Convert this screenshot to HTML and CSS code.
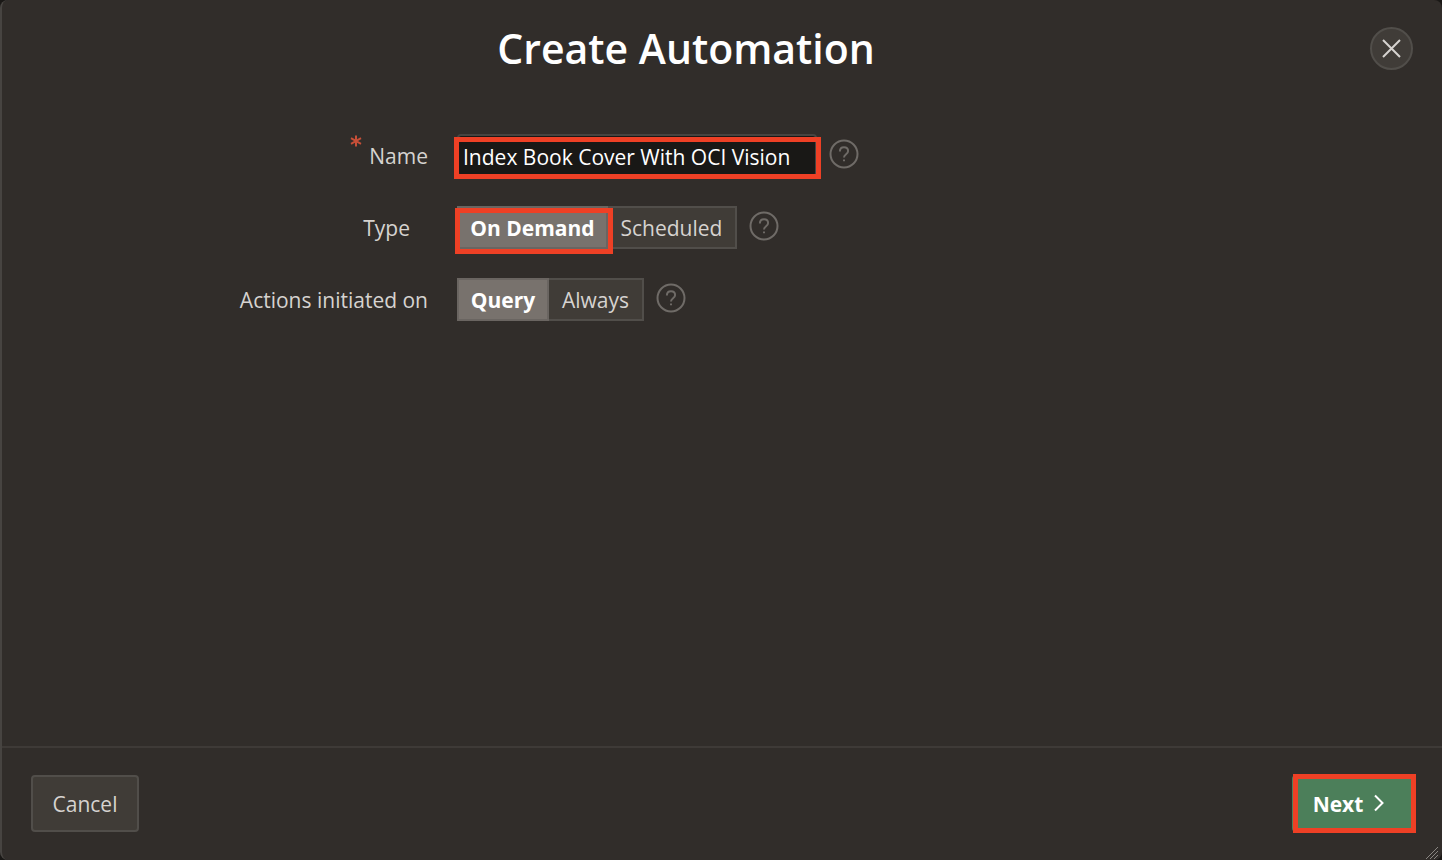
FILE: index.html
```html
<!DOCTYPE html>
<html lang="en">
<head>
<meta charset="utf-8">
<title>Create Automation</title>
<link rel="stylesheet" href="styles.css">
</head>
<body>
<main class="dialog">
  <header class="dialog-header">
    <h1 class="dialog-title">Create Automation</h1>
    <button class="close" type="button" aria-label="Close">
      <svg width="19" height="19" viewBox="0 0 19 19"><path d="M1 1l17 17M18 1L1 18"/></svg>
    </button>
  </header>
  <form class="form">
    <div class="row">
      <label class="label" for="name"><span class="required"><svg width="12" height="24" viewBox="0 0 12 24"><path d="M6 .5v11M1 3.2l10 5.6M11 3.2L1 8.8"/></svg></span>Name</label>
      <div class="field marked marked-name">
        <input class="text-input" id="name" type="text" value="Index Book Cover With OCI Vision" required>
      </div>
      <button class="help" type="button" aria-label="Help for Name">
        <svg width="30" height="30" viewBox="0 0 30 30"><circle cx="15" cy="15" r="13.5"/><path d="M10.9 12.4c0-2.5 1.6-4.2 4.1-4.2s4.1 1.5 4.1 3.8c0 3.4-4.1 3-4.1 6.5"/><path d="M15 20.4v1.8"/></svg>
      </button>
    </div>
    <div class="row">
      <span class="label label-inset" id="type-label">Type</span>
      <div class="group" role="group" aria-labelledby="type-label">
        <div class="marked marked-type"><button class="segment selected segment-type" type="button" aria-pressed="true">On Demand</button></div>
        <button class="segment segment-scheduled" type="button" aria-pressed="false">Scheduled</button>
      </div>
      <button class="help" type="button" aria-label="Help for Type">
        <svg width="30" height="30" viewBox="0 0 30 30"><circle cx="15" cy="15" r="13.5"/><path d="M10.9 12.4c0-2.5 1.6-4.2 4.1-4.2s4.1 1.5 4.1 3.8c0 3.4-4.1 3-4.1 6.5"/><path d="M15 20.4v1.8"/></svg>
      </button>
    </div>
    <div class="row">
      <span class="label" id="actions-label">Actions initiated on</span>
      <div class="group" role="group" aria-labelledby="actions-label">
        <button class="segment selected segment-query" type="button" aria-pressed="true">Query</button>
        <button class="segment segment-always" type="button" aria-pressed="false">Always</button>
      </div>
      <button class="help" type="button" aria-label="Help for Actions initiated on">
        <svg width="30" height="30" viewBox="0 0 30 30"><circle cx="15" cy="15" r="13.5"/><path d="M10.9 12.4c0-2.5 1.6-4.2 4.1-4.2s4.1 1.5 4.1 3.8c0 3.4-4.1 3-4.1 6.5"/><path d="M15 20.4v1.8"/></svg>
      </button>
    </div>
  </form>
  <footer class="dialog-footer">
    <button class="button" type="button">Cancel</button>
    <div class="marked marked-next">
      <button class="button primary" type="button">Next
        <svg width="12" height="20" viewBox="0 0 12 20"><path d="M2 1.5L9.5 9 2 16.5"/></svg>
      </button>
    </div>
  </footer>
  <svg class="resize" width="14" height="14" viewBox="0 0 14 14"><path d="M1 13L13 1M5 13l8-8M9 13l4-4"/></svg>
</main>
</body>
</html>
```

FILE: styles.css
```css
* {
  box-sizing: border-box;
}

body {
  margin: 0;
  background: #1a1816;
  font-family: "Open Sans", "Noto Sans", sans-serif;
  font-size: 21px;
  line-height: 30px;
  color: #d6d3d0;
}

button,
input {
  font: inherit;
  color: inherit;
  margin: 0;
}

svg {
  display: block;
  fill: none;
  stroke: currentColor;
}

.dialog {
  position: relative;
  display: flex;
  flex-direction: column;
  min-height: 100vh;
  background: #312d2a;
  border-left: 2px solid #474441;
  border-radius: 8px;
}

.dialog-header {
  display: flex;
  align-items: center;
  padding: 18px 29px 18px 0;
}

.dialog-title {
  flex: 1;
  margin: 0;
  font-size: 41px;
  font-weight: 650;
  line-height: 60px;
  text-align: center;
  color: #fff;
}

.close {
  display: flex;
  align-items: center;
  justify-content: center;
  width: 43px;
  height: 43px;
  padding: 0;
  border: 2px solid #514e4a;
  border-radius: 50%;
  background: #403c38;
}

.close svg {
  stroke-width: 2;
}

.form {
  flex: 1;
  display: flex;
  flex-direction: column;
  gap: 29px;
  padding: 38px 0;
}

.row {
  display: flex;
  align-items: center;
  min-height: 43px;
}

.label {
  display: flex;
  align-items: flex-end;
  justify-content: flex-end;
  width: 455px;
  padding-right: 29px;
}

.label-inset {
  padding-right: 47px;
}

.required {
  height: 36px;
  margin: -6px 7px 0 0;
  color: #c74f38;
}

.required svg {
  stroke-width: 2;
}

/* Highlight frames lie over the control they call out. */
.marked {
  position: relative;
}

.marked::after {
  content: "";
  position: absolute;
  border: 5px solid #ee4025;
  pointer-events: none;
}

.marked-name::after {
  inset: 3px -4px -2px -3px;
}

.marked-type::after {
  inset: 2px -5px -5px -2px;
}

.marked-next::after {
  inset: -1px -4px -1px 1px;
}

.text-input {
  display: block;
  width: 360px;
  height: 43px;
  padding: 2px 5px 0 4px;
  border: 2px solid #474441;
  border-radius: 4px;
  background: #191816;
  color: #fff;
}

.group {
  display: flex;
}

.segment {
  height: 43px;
  padding: 0;
  border: 2px solid #514e4a;
  border-left-width: 0;
  background: #403c37;
}

.selected {
  border: 2px solid #6a6561;
  background: #78726d;
  color: #fff;
  font-weight: 700;
}

.segment-type {
  width: 151px;
  display: block;
}

.segment-scheduled {
  width: 129px;
}

.segment-query {
  width: 92px;
}

.segment-always {
  width: 95px;
}

.help {
  margin-left: 12px;
  padding: 0 0 3px;
  border: 0;
  background: none;
  color: #6f6b67;
}

.help svg {
  stroke-width: 2;
}

.dialog-footer {
  display: flex;
  justify-content: space-between;
  padding: 27px 30px 28px 29px;
  border-top: 2px solid #3e3a37;
}

.button {
  display: flex;
  align-items: center;
  justify-content: center;
  gap: 10px;
  width: 108px;
  height: 57px;
  padding: 0;
  border: 2px solid #514e4a;
  border-radius: 4px;
  background: #403c37;
}

.primary {
  width: 120px;
  padding-right: 6px;
  border-color: #4c7f5a;
  background: #4c7f5a;
  color: #fff;
  font-weight: 700;
}

.primary svg {
  stroke-width: 2;
}

.resize {
  position: absolute;
  right: 3px;
  bottom: 0;
  color: #8a8682;
}
```
